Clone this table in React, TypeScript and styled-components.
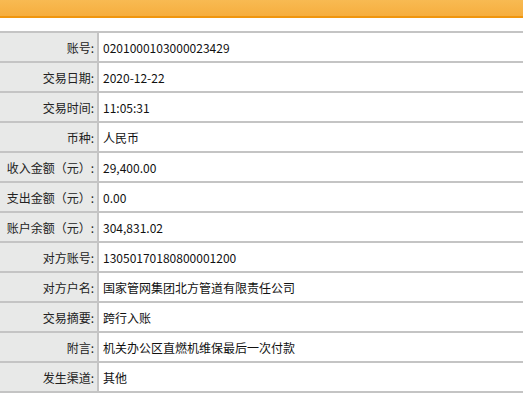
import React from 'react';
import styled, { createGlobalStyle } from 'styled-components';

const GlobalStyle = createGlobalStyle`
  html, body {
    margin: 0;
    padding: 0;
    background: #ffffff;
  }
  body {
    font-family: "Noto Sans CJK SC", "Liberation Sans", sans-serif;
  }
`;

type RowType = {
    label: string
    value: string
};

const rows: RowType[] = [
    { label: '账号:', value: '0201000103000023429' },
    { label: '交易日期:', value: '2020-12-22' },
    { label: '交易时间:', value: '11:05:31' },
    { label: '币种:', value: '人民币' },
    { label: '收入金额（元）:', value: '29,400.00' },
    { label: '支出金额（元）:', value: '0.00' },
    { label: '账户余额（元）:', value: '304,831.02' },
    { label: '对方账号:', value: '13050170180800001200' },
    { label: '对方户名:', value: '国家管网集团北方管道有限责任公司' },
    { label: '交易摘要:', value: '跨行入账' },
    { label: '附言:', value: '机关办公区直燃机维保最后一次付款' },
    { label: '发生渠道:', value: '其他' },
];

export default function App() {
    return (
        <Page>
            <GlobalStyle />
            <Header />
            <Gap />
            <Table>
                {rows.map((r) => (
                    <Row key={r.label}>
                        <Label>{r.label}</Label>
                        <Value>{r.value}</Value>
                    </Row>
                ))}
            </Table>
        </Page>
    );
}

const Page = styled.div`
  width: 523px;
  height: 399px;
  overflow: hidden;
  background: #ffffff;
`

const Header = styled.div`
  height: 16px;
  background: linear-gradient(180deg, #f8ba52 0%, #f6ae3e 100%);
  border-bottom: 2px solid #f0960e;
`

const Gap = styled.div`
  height: 13px;
`

const Table = styled.div`
  display: flex;
  flex-direction: column;
  border-top: 2px solid #c4c4c4;
`

const Row = styled.div`
  display: grid;
  grid-template-columns: 99px 1fr;
  height: 28px;
  border-bottom: 2px solid #c4c4c4;
`

const Label = styled.div`
  display: flex;
  align-items: center;
  justify-content: flex-end;
  padding-right: 3px;
  background: #e8e9e8;
  border-right: 2px solid #c4c4c4;
  color: #222222;
  font-size: 12px;
  white-space: nowrap;
`

const Value = styled.div`
  display: flex;
  align-items: center;
  padding-left: 4px;
  color: #111111;
  font-size: 12px;
  white-space: nowrap;
`
